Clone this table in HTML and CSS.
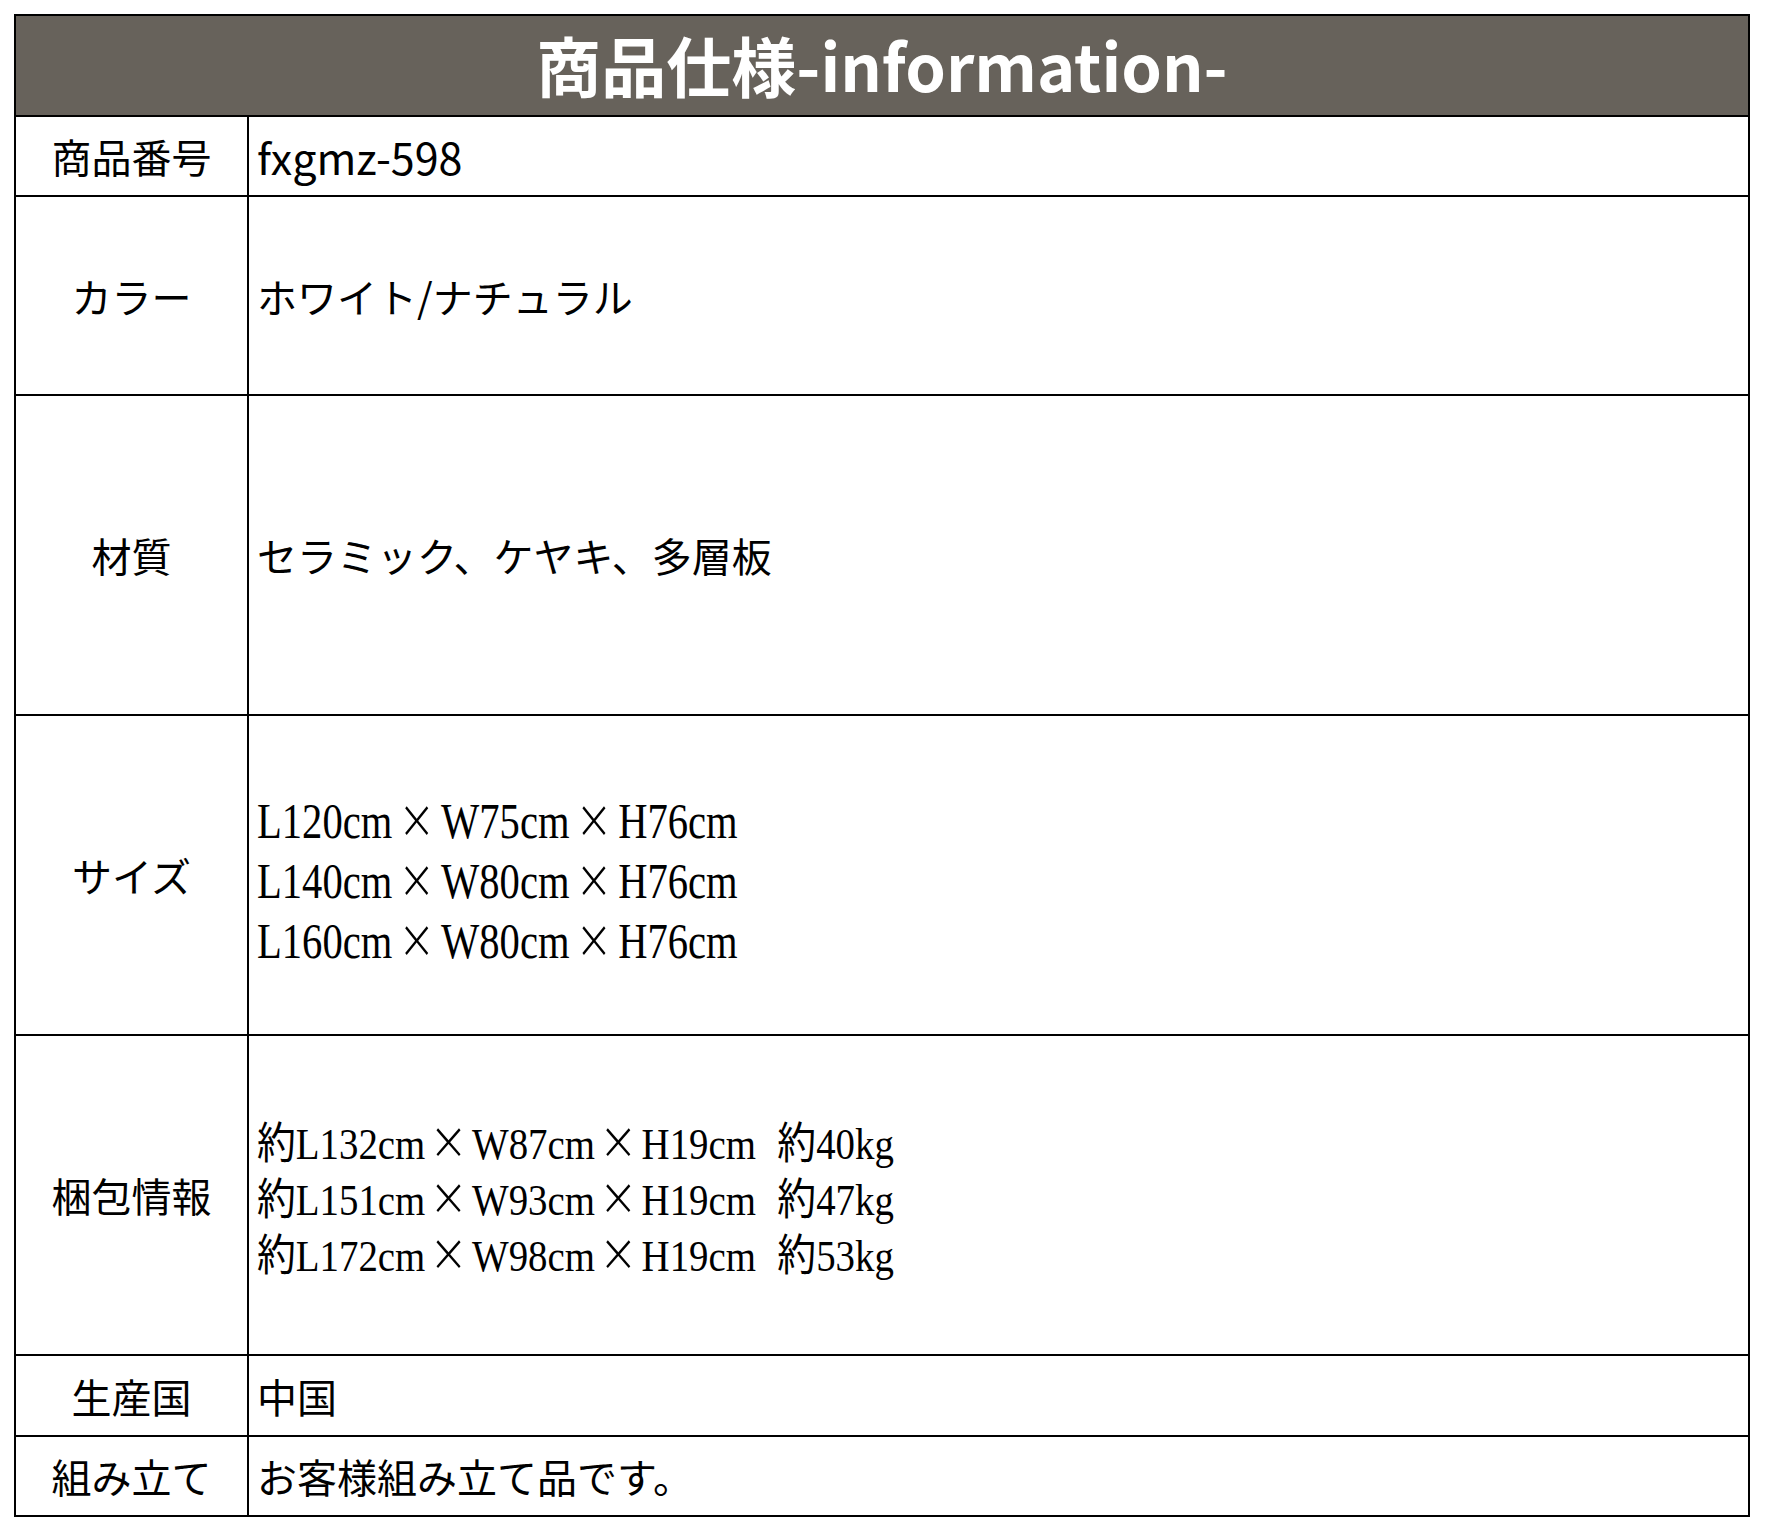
FILE: index.html
```html
<!DOCTYPE html>
<html lang="ja">
<head>
<meta charset="utf-8">
<title>商品仕様</title>
<link rel="stylesheet" href="styles.css">
</head>
<body>
<div class="spec">
  <div class="title">商品仕様-information-</div>
  <div class="row r80">
    <div class="label">商品番号</div>
    <div class="value latin">fxgmz-598</div>
  </div>
  <div class="row r197">
    <div class="label">カラー</div>
    <div class="value">ホワイト/ナチュラル</div>
  </div>
  <div class="row r318">
    <div class="label">材質</div>
    <div class="value">セラミック、ケヤキ、多層板</div>
  </div>
  <div class="row r318">
    <div class="label">サイズ</div>
    <div class="value lines-size">
      <div class="serif size">L120cm<span class="x">×</span>W75cm<span class="x">×</span>H76cm</div>
      <div class="serif size">L140cm<span class="x">×</span>W80cm<span class="x">×</span>H76cm</div>
      <div class="serif size">L160cm<span class="x">×</span>W80cm<span class="x">×</span>H76cm</div>
    </div>
  </div>
  <div class="row r318">
    <div class="label">梱包情報</div>
    <div class="value lines-pack">
      <div class="serif pack">約L132cm<span class="x">×</span>W87cm<span class="x">×</span>H19cm 約40kg</div>
      <div class="serif pack">約L151cm<span class="x">×</span>W93cm<span class="x">×</span>H19cm 約47kg</div>
      <div class="serif pack">約L172cm<span class="x">×</span>W98cm<span class="x">×</span>H19cm 約53kg</div>
    </div>
  </div>
  <div class="row r79">
    <div class="label">生産国</div>
    <div class="value">中国</div>
  </div>
  <div class="row r78 last">
    <div class="label">組み立て</div>
    <div class="value">お客様組み立て品です。</div>
  </div>
</div>
</body>
</html>
```

FILE: styles.css
```css
html, body {
  margin: 0;
  padding: 0;
  background: #ffffff;
}

body {
  font-family: "Noto Sans CJK JP", "Noto Sans", sans-serif;
  color: #000000;
}

.spec {
  width: 1736px;
  margin: 14px 0 0 14px;
  border: 2px solid #000000;
  box-sizing: border-box;
}

.title {
  height: 96px;
  padding-bottom: 3px;
  background: #67625b;
  border-bottom: 2px solid #000000;
  color: #ffffff;
  font-size: 65px;
  font-weight: 700;
  display: flex;
  align-items: center;
  justify-content: center;
  line-height: 1;
}

.row {
  display: grid;
  grid-template-columns: 233px 1fr;
  border-bottom: 2px solid #000000;
}

.row.last {
  border-bottom: none;
}

.r80 { height: 78px; }
.r197 { height: 197px; }
.r318 { height: 318px; }
.r79 { height: 79px; }
.r78 { height: 78px; }

.label {
  border-right: 2px solid #000000;
  display: flex;
  align-items: center;
  justify-content: center;
  font-size: 40px;
  line-height: 1;
}

.value {
  display: flex;
  flex-direction: column;
  justify-content: center;
  padding-left: 8px;
  font-size: 40px;
  line-height: 1;
}

.value.latin {
  font-size: 43px;
}

.value.lines-size {
  padding-top: 12px;
}

.value.lines-pack {
  padding-top: 11px;
}

.serif {
  font-family: "Liberation Serif", "Noto Sans CJK JP", serif;
  transform-origin: left center;
  white-space: nowrap;
}

.size {
  font-size: 50px;
  line-height: 60px;
  transform: scaleX(0.812);
}

.pack {
  font-size: 44px;
  line-height: 56px;
  word-spacing: 0.3em;
  transform: scaleX(0.883);
}

.x {
  display: inline-block;
  width: 1em;
  text-align: center;
  font-family: "DejaVu Sans", sans-serif;
  font-weight: 200;
  font-size: 1.2em;
  line-height: 0.8;
  word-spacing: 0;
}

.size .x {
  width: 1.09em;
  font-size: 1.1em;
}
```
